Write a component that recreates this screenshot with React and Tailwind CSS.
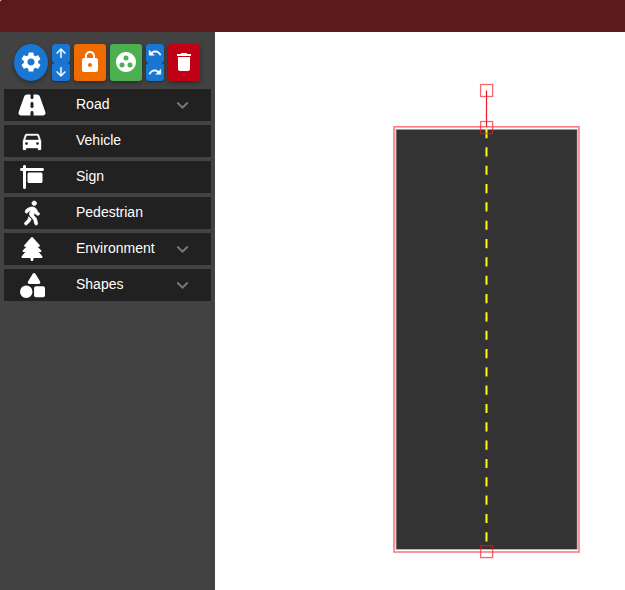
import { MdSettings, MdArrowUpward, MdArrowDownward, MdLock, MdGroupWork, MdUndo, MdRedo, MdDelete, MdDirectionsCar } from "react-icons/md";
import { FaRoad, FaSignHanging, FaTree, FaShapes } from "react-icons/fa6";
import { FaWalking } from "react-icons/fa";

const items = [
  { label: "Road", Icon: FaRoad, size: "h-6 w-[28px]", more: true },
  { label: "Vehicle", Icon: MdDirectionsCar, size: "size-6 [&>path:last-child]:stroke-[0.4]" },
  { label: "Sign", Icon: FaSignHanging, size: "size-6" },
  { label: "Pedestrian", Icon: FaWalking, size: "size-6 overflow-visible [&>path]:stroke-[16]" },
  { label: "Environment", Icon: FaTree, size: "size-6", more: true },
  { label: "Shapes", Icon: FaShapes, size: "size-[25px]", more: true },
];

const raised = "flex items-center justify-center shadow-[0_2px_4px_rgba(0,0,0,0.35)]";

function Pair({ First, Second }) {
  const half = "flex h-[18.5px] w-[18px] items-center justify-center rounded-[3px] bg-[#1976d2] shadow-[0_1px_2px_rgba(0,0,0,0.45)]";
  const glyph = "size-[14px] [&>path:last-child]:stroke-[0.7]";
  return (
    <div className="flex flex-col">
      <button className={half}><First className={glyph} /></button>
      <button className={half}><Second className={glyph} /></button>
    </div>
  );
}

function Canvas() {
  return (
    <svg className="block h-[558px] w-[410px]" viewBox="215 32 410 558" fill="none">
      <rect x="395.6" y="129" width="182" height="420.7" fill="#999" />
      <rect x="396.6" y="130" width="180.2" height="419" fill="#333" />
      <path d="M486.5 129V549" stroke="#ff0" strokeWidth="2" strokeDasharray="9.17 9.16" />
      <g stroke="#f01820" strokeOpacity=".65" strokeWidth="1.3">
        <rect x="394" y="126.8" width="185" height="425.2" strokeOpacity=".6" strokeWidth="1.5" />
        <rect x="480.6" y="84.5" width="12" height="12" />
        <rect x="480.6" y="121.5" width="12" height="12" />
        <rect x="480.6" y="545.6" width="12" height="12" />
      </g>
      <path d="M486.5 90.5V127" stroke="#e81c24" strokeWidth="1.2" />
    </svg>
  );
}

export default function App() {
  return (
    <div className="flex h-[590px] w-[625px] flex-col overflow-hidden bg-white font-['Liberation_Sans',Arial,sans-serif] text-white">
      <header className="h-8 shrink-0 rounded-tl-[2px] bg-[#5e1a1a]" />
      <main className="flex flex-1">
        <aside className="w-[215px] shrink-0 bg-[#424242] pt-3">
          <div className="flex h-[37px] gap-1 pl-[14px]">
            <button className={`${raised} h-[37px] w-[34px] rounded-[50%] bg-[#1976d2] pb-px`}><MdSettings className="size-6" /></button>
            <Pair First={MdArrowUpward} Second={MdArrowDownward} />
            <button className={`${raised} w-8 rounded-[3px] bg-[#ef6c00] pb-px`}><MdLock className="size-6" /></button>
            <button className={`${raised} w-8 rounded-[3px] bg-[#4caf50] pb-px`}><MdGroupWork className="size-6" /></button>
            <Pair First={MdUndo} Second={MdRedo} />
            <button className={`${raised} w-8 rounded-[3px] bg-[#c10015] pb-px`}><MdDelete className="size-6" /></button>
          </div>
          <nav className="mt-2 flex flex-col gap-1 px-1">
            {items.map(({ label, Icon, size, more }) => (
              <div key={label} className="flex h-8 items-center bg-[#212121] text-sm">
                <span className="flex w-14 shrink-0 justify-center"><Icon className={size} /></span>
                <span className="ml-4 -mt-0.5">{label}</span>
                {more && (
                  <svg className="mr-[22px] ml-auto size-[13px]" viewBox="0 0 13 13" fill="none">
                    <path d="M1.3 3.5L6.5 8.7L11.7 3.5" stroke="#777" strokeWidth="2" />
                  </svg>
                )}
              </div>
            ))}
          </nav>
        </aside>
        <section className="flex-1 bg-white"><Canvas /></section>
      </main>
    </div>
  );
}
